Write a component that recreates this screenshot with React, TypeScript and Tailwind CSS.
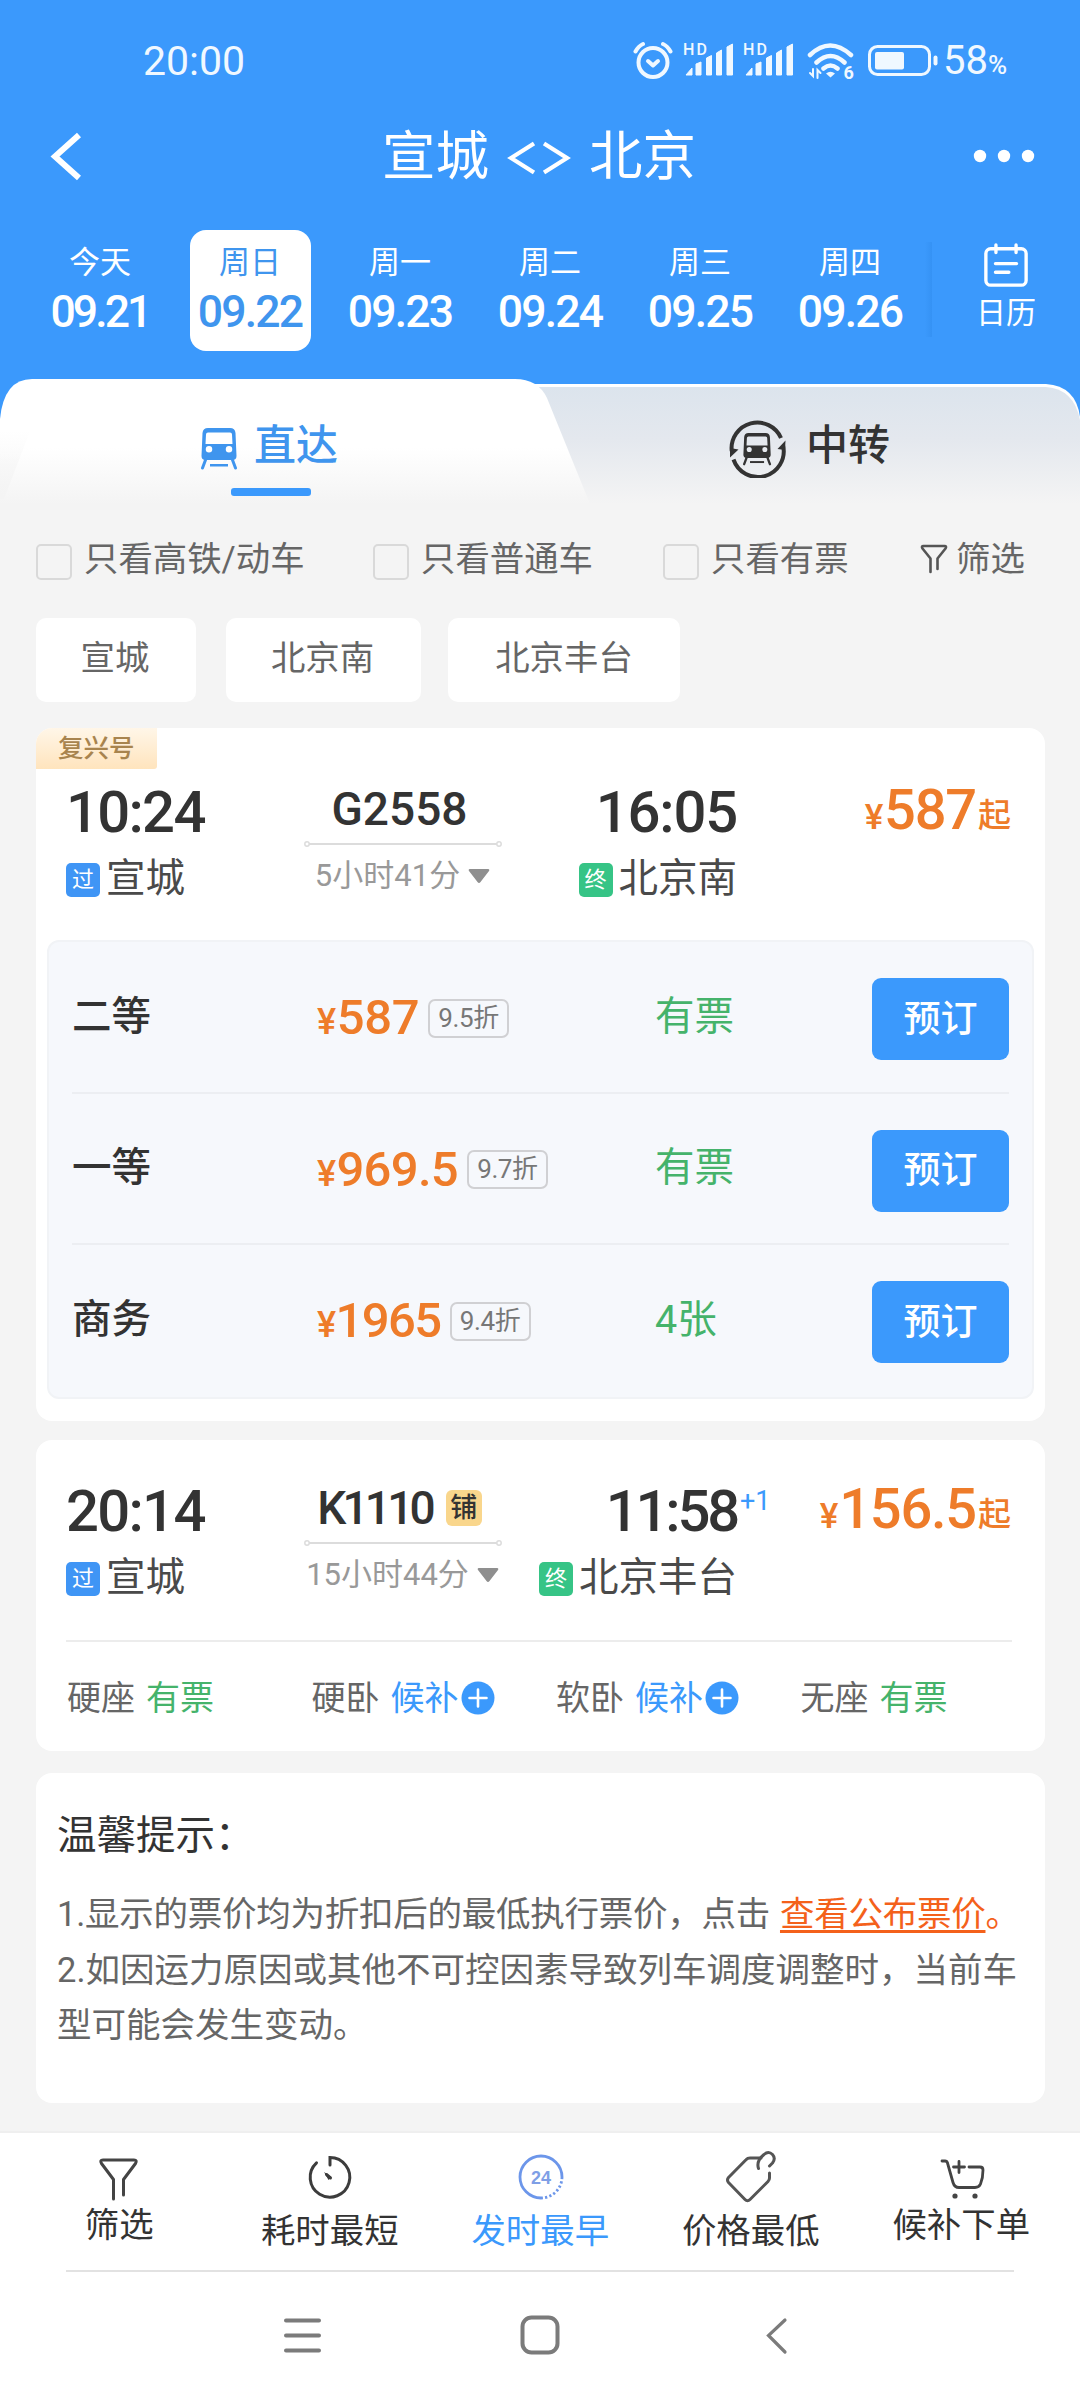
import { ReactNode } from "react";

/* ----------- Data ----------- */
interface IDay {
  label: string;
  date: string;
}
interface ISeat {
  name: string;
  price: string;
  discount: string;
  stock: string;
  tracking: string;
}
interface ITrain {
  depart: string;
  arrive: string;
  arriveTracking: string;
  nextDay?: string;
  code: string;
  codeTracking: string;
  sleeper?: boolean;
  duration: string;
  from: string;
  to: string;
  price: string;
}

const DAYS: IDay[] = [
  { label: "今天", date: "09.21" },
  { label: "周日", date: "09.22" },
  { label: "周一", date: "09.23" },
  { label: "周二", date: "09.24" },
  { label: "周三", date: "09.25" },
  { label: "周四", date: "09.26" },
];

const SEATS: ISeat[] = [
  { name: "二等", price: "587", discount: "9.5折", stock: "有票", tracking: "tracking-[-0.4px]" },
  { name: "一等", price: "969.5", discount: "9.7折", stock: "有票", tracking: "tracking-[-0.7px]" },
  { name: "商务", price: "1965", discount: "9.4折", stock: "4张", tracking: "tracking-[-1.6px]" },
];

const TRAINS: ITrain[] = [
  {
    depart: "10:24",
    arrive: "16:05",
    arriveTracking: "tracking-[-1.2px]",
    code: "G2558",
    codeTracking: "",
    duration: "5小时41分",
    from: "宣城",
    to: "北京南",
    price: "587",
  },
  {
    depart: "20:14",
    arrive: "11:58",
    arriveTracking: "tracking-[-3.2px]",
    nextDay: "+1",
    code: "K1110",
    codeTracking: "tracking-[-3.8px]",
    sleeper: true,
    duration: "15小时44分",
    from: "宣城",
    to: "北京丰台",
    price: "156.5",
  },
];

const SIMPLE_SEATS = [
  { name: "硬座", waitlist: false },
  { name: "硬卧", waitlist: true },
  { name: "软卧", waitlist: true },
  { name: "无座", waitlist: false },
];

/* ----------- Icons ----------- */
const SignalIcon = () => (
  <svg width="52" height="36" viewBox="0 0 52 36" fill="#f0f8ff">
    <text x="0" y="14" fontSize="16" fontWeight="500" fontFamily="Roboto, sans-serif" textLength="24">
      HD
    </text>
    <path d="M3 34l6-7v7zM13 34v-11l5-2v13zM23.500 34v-17l5-2.500v19.500zM33.500 34v-22l5-3v25zM44 34v-28l5.500-3v31z" stroke="#f0f8ff" strokeWidth="1" strokeLinejoin="round" />
  </svg>
);

const StatusIcons = () => (
  <div className="flex items-start">
    <svg width="40" height="38" viewBox="0 0 40 38" fill="none" stroke="#f0f8ff" strokeWidth="4" strokeLinecap="round">
      <circle cx="20" cy="21.500" r="14.500" />
      <path d="M2.500 10.500q3-5.500 7.500-7.500M37.500 10.500q-3-5.500-7.500-7.500" />
      <path d="M15 20l5 4.500 5-4.500" strokeLinejoin="round" />
    </svg>
    <div className="ml-[10px]">
      <SignalIcon />
    </div>
    <div className="ml-[8px]">
      <SignalIcon />
    </div>
    <svg className="ml-[12px] mt-[1px]" width="50" height="40" viewBox="0 0 50 40" fill="none" stroke="#f0f8ff" strokeWidth="4.500" strokeLinecap="round">
      <path d="M3 13q20-19 41 0M9.500 20.500q14-13 28 0M16.500 26.500q7-6 14 0" />
      <path d="M19 31.500q4.500-3.500 9 0l-4.500 4z" fill="#f0f8ff" stroke="none" />
      <path d="M6 27v7l-3-3M10.500 36v-8l3 3" strokeWidth="2" />
      <text x="36.500" y="36.500" fontSize="18" fontWeight="700" fontFamily="Roboto, sans-serif" fill="#f0f8ff" stroke="none">
        6
      </text>
    </svg>
    <svg className="ml-[11px] mt-[4px]" width="70" height="32" viewBox="0 0 70 32">
      <rect x="1.500" y="1.500" width="60" height="28" rx="8" fill="none" stroke="#f0f8ff" strokeWidth="3" />
      <rect x="7" y="7" width="29" height="17.500" rx="2" fill="#f0f8ff" />
      <rect x="65.500" y="10.500" width="4" height="10" rx="2" fill="#f0f8ff" />
    </svg>
  </div>
);

const CalendarIcon = () => (
  <svg width="46" height="46" viewBox="0 0 48 48" fill="none" stroke="#fff" strokeWidth="3.500" strokeLinecap="round">
    <rect x="3" y="6" width="42" height="38" rx="5" />
    <path d="M13.500 2v8M34.500 2v8M13 21.500h22M13 30.500h14" />
  </svg>
);

const TrainGlyph = () => (
  <g>
    <path
      fillRule="evenodd"
      d="M7 0h22q5 0 5.500 5l1 23q0 4-4 4h-27q-4 0-4-4l1-23q.5-5 5.500-5zM7 4.500q-2 0-2 2l-.5 9.500h27l-.5-9.500q0-2-2-2zM8 18a3.200 3.200 0 1 0 0 6.500a3.200 3.200 0 1 0 0-6.500zM28 18a3.200 3.200 0 1 0 0 6.500a3.200 3.200 0 1 0 0-6.500z"
    />
    <path d="M4.500 32L1.500 40M31.500 32L34.500 40" stroke="currentColor" strokeWidth="3" strokeLinecap="round" />
    <rect x="9" y="36" width="18" height="2.500" />
  </g>
);

const TrainIcon = () => (
  <svg width="36" height="42" viewBox="0 0 36 42" fill="currentColor">
    <TrainGlyph />
  </svg>
);

const TransferIcon = () => (
  <svg width="58" height="58" viewBox="0 0 58 58" fill="currentColor">
    <g fill="none" stroke="currentColor" strokeWidth="4">
      <path d="M3.700 31A25.800 25.800 0 0 1 53 18" />
      <path d="M55.200 26A25.800 25.800 0 0 1 5.500 39.500" />
    </g>
    <path d="M2 28l8.500 1.500L2 37.500zM57.500 20.500l-8 8.500 7.500 1z" />
    <g transform="translate(15 13) scale(.78)">
      <TrainGlyph />
    </g>
  </svg>
);

const FunnelSmallIcon = () => (
  <svg width="28" height="30" viewBox="0 0 28 30" fill="none" stroke="#555" strokeWidth="2.600" strokeLinecap="round" strokeLinejoin="round">
    <path d="M10.500 28V14.500L2.500 4.500q-1.500-2.500 1-2.500h21q2.500 0 1 2.500l-8 10V25" />
  </svg>
);

const FunnelIcon = () => (
  <svg width="50" height="56" viewBox="0 0 50 56" fill="none" stroke="#444" strokeWidth="3" strokeLinecap="round" strokeLinejoin="round">
    <path d="M19.500 47V27.500L7.500 11.500Q5.500 8 9 8H40Q43.500 8 41.500 11.500L29.500 27.500V43" />
  </svg>
);

const ClockIcon = () => (
  <svg width="50" height="56" viewBox="0 0 50 56" fill="none" stroke="#3c3c3c" strokeWidth="3" strokeLinecap="round">
    <path d="M25 13V5.500A19.800 19.800 0 1 1 11.500 10.800" />
    <path d="M19 20l7.500 5-3 3z" fill="#3c3c3c" stroke="none" />
    <path d="M21.500 22.500l4 3.500" />
  </svg>
);

const HoursIcon = () => (
  <svg width="50" height="56" viewBox="0 0 50 56" fill="none" stroke="#6c96ea" strokeWidth="2.800">
    <path d="M47 25A21 21 0 1 0 26 46" />
    <path d="M47 25A21 21 0 0 1 26 46" strokeDasharray="2.200 2.200" />
    <text x="26" y="31.500" textAnchor="middle" fontSize="18" fontWeight="700" fontFamily="Liberation Sans, sans-serif" fill="#7f9fe6" stroke="none">
      24
    </text>
  </svg>
);

const TagIcon = () => (
  <svg width="56" height="60" viewBox="0 0 56 60" fill="none" stroke="#555" strokeWidth="3" strokeLinecap="round" strokeLinejoin="round">
    <path d="M38 9H27Q24.500 9 23 10.700L5.500 28.500Q3.500 31 5.500 33.500L22 50.500Q24.500 53 27 50.500L45 32.500Q46.500 31 46.500 29V24" />
    <path d="M35.500 19.500Q33 12 41 5.500Q45.500 1.500 49.500 5.500Q53 9.500 49.500 14L46.500 17" />
  </svg>
);

const CartIcon = () => (
  <svg width="50" height="56" viewBox="0 0 50 56" fill="none" stroke="#444" strokeWidth="2.800" strokeLinecap="round" strokeLinejoin="round">
    <path d="M6 9h3q2 0 2.500 2L17 30.500q1.500 5 6 5h16q4 0 5.500-3.500Q47 26 47 18q0-3-3-3H33" />
    <path d="M23 9.500v11M17.500 15h11" />
    <circle cx="19" cy="44" r="2.600" fill="#444" stroke="none" />
    <circle cx="39" cy="44" r="2.600" fill="#444" stroke="none" />
  </svg>
);

const PlusCircle = () => (
  <svg className="ml-[2px]" width="34" height="34" viewBox="0 0 34 34">
    <circle cx="17" cy="17" r="16.500" fill="#3b99fc" />
    <path d="M17 8.500v17M8.500 17h17" stroke="#fff" strokeWidth="2.600" strokeLinecap="round" />
  </svg>
);

/* ----------- Header ----------- */
const StatusBar = () => (
  <div className="flex h-[110px] pt-[41px] pl-[143px] text-[#f0f8ff]">
    <span className="w-[490px] pt-[1px] text-[41px] leading-[38px]">20:00</span>
    <StatusIcons />
    <span className="ml-[5px] pt-[1px] text-[40px] leading-[38px]">
      58<span className="text-[26px] font-medium">%</span>
    </span>
  </div>
);

const TitleBar = () => (
  <div className="flex h-[92px] items-center justify-between pr-[44px] pl-[46px] text-white">
    <svg width="120" height="50" viewBox="0 0 120 50" fill="none" stroke="#fff" strokeWidth="6">
      <path d="M33 4L9 25.500L33 47" />
    </svg>
    <h1 className="pt-[2px] text-[53.5px] leading-[64px] font-normal">
      宣城<span className="mx-[18px] inline-flex">
        <svg width="64" height="34" viewBox="0 0 64 34" fill="none" stroke="#fff" strokeWidth="4.200">
          <path d="M27 2.500L4 17L27 31.500M37 2.500L60 17L37 31.500" />
        </svg>
      </span>北京
    </h1>
    <svg width="124" height="20" viewBox="0 0 124 20" fill="#fff">
      <circle cx="68" cy="10" r="6.200" />
      <circle cx="92" cy="10" r="6.200" />
      <circle cx="116" cy="10" r="6.200" />
    </svg>
  </div>
);

const DateStrip = () => (
  <div className="flex h-[177px] pt-[28px] text-white">
    <div className="flex w-[932px] pl-[25px]">
      {DAYS.map(({ label, date }, idx) => (
        <div key={date} className="flex w-[150px] shrink-0 justify-center">
          <div
            className={
              idx === 1
                ? "flex h-[121px] w-[121px] flex-col items-center rounded-2xl bg-white pt-[14px] text-[#3f95ee]"
                : "flex h-[121px] w-[121px] flex-col items-center pt-[14px]"
            }
          >
            <span className="text-[31px] leading-[38px]">{label}</span>
            <span
              className={
                idx === 0
                  ? "mt-[9px] text-[44.5px] leading-[42px] font-medium tracking-[-2.9px]"
                  : "mt-[9px] text-[44.5px] leading-[42px] font-medium tracking-[-1.8px]"
              }
            >
              {date}
            </span>
          </div>
        </div>
      ))}
      <div className="mt-[12px] h-[95px] w-[7px] shrink-0 bg-linear-to-r from-[#3b99fc] to-[#3592f4]" />
    </div>
    <div className="flex w-[148px] flex-col items-center pt-[13px]">
      <CalendarIcon />
      <span className="mt-[5px] text-[30px] leading-[38px]">日历</span>
    </div>
  </div>
);

const TabBar = () => (
  <div className="relative h-[125px] bg-[#f4f4f4]">
    <svg className="absolute inset-0" width="1080" height="125" viewBox="0 0 1080 125">
      <defs>
        <linearGradient id="tabOn" x1="0" y1="0" x2="0" y2="1">
          <stop offset=".55" stopColor="#fff" />
          <stop offset="1" stopColor="#f4f4f4" />
        </linearGradient>
        <linearGradient id="tabEdge" x1="0" y1="0" x2="0" y2="1">
          <stop offset="0" stopColor="#f4f4f4" stopOpacity="0" />
          <stop offset="1" stopColor="#f4f4f4" />
        </linearGradient>
        <linearGradient id="tabOff" x1="0" y1="0" x2="0" y2="1">
          <stop offset="0" stopColor="#dce4ed" />
          <stop offset=".45" stopColor="#e4e8ee" />
          <stop offset="1" stopColor="#f4f4f4" />
        </linearGradient>
      </defs>
      <rect width="1080" height="50" fill="#3b99fc" />
      <path d="M480 5H1046Q1076 7 1080 38V60H480z" fill="#fff" />
      <path d="M480 8H1046Q1074 10 1080 41V125H480z" fill="url(#tabOff)" />
      <path d="M0 40Q4 0 32 0H515Q538 0 547 19L590 125H0z" fill="url(#tabOn)" />
      <path d="M0 52H30L4 120H0z" fill="url(#tabEdge)" />
    </svg>
    <div className="relative flex">
      <div className="flex w-[540px] pt-[44px] pl-[201px] text-[#3f95ee]">
        <div className="pt-[5px]">
          <TrainIcon />
        </div>
        <div className="ml-[17px] pt-[2px]">
          <span className="block text-[42px] leading-[42px] font-medium">直达</span>
          <div className="-ml-[23px] mt-[21px] h-[8px] w-[80px] rounded-[3px] bg-[#3b99fc]" />
        </div>
      </div>
      <div className="flex pt-[44px] pl-[188px] text-[#333]">
        <div className="-mt-[3px]">
          <TransferIcon />
        </div>
        <span className="ml-[20px] pt-[2px] text-[42px] leading-[42px] font-medium">中转</span>
      </div>
    </div>
  </div>
);

/* ----------- Filters ----------- */
const CheckOption = ({ label, className }: { label: string; className: string }) => (
  <div className={`flex items-center ${className}`}>
    <div className="mt-[5px] h-[36px] w-[36px] rounded-[5px] border-[2.5px] border-[#d9d9d9]" />
    <span className="ml-[12px]">{label}</span>
  </div>
);

const Filters = () => (
  <div className="h-[224px] pl-[36px] text-[34.4px] leading-[44px] text-[#666]">
    <div className="mt-[33px] flex h-[44px] items-center">
      <CheckOption label="只看高铁/动车" className="w-[337px]" />
      <CheckOption label="只看普通车" className="w-[290px]" />
      <CheckOption label="只看有票" className="w-[257px]" />
      <div className="flex items-center">
        <FunnelSmallIcon />
        <span className="ml-[8px]">筛选</span>
      </div>
    </div>
    <div className="mt-[37px] flex">
      <div className="h-[84px] w-[160px] rounded-[10px] bg-white pt-[18px] pr-[2px] text-center">宣城</div>
      <div className="ml-[30px] h-[84px] w-[195px] rounded-[10px] bg-white pt-[18px] pr-[2px] text-center">北京南</div>
      <div className="ml-[27px] h-[84px] w-[232px] rounded-[10px] bg-white pt-[18px] text-center">北京丰台</div>
    </div>
  </div>
);

/* ----------- Trains ----------- */
const StationMark = ({ children, green }: { children: string; green?: boolean }) => (
  <span
    className={
      green
        ? "mt-[2px] mr-[6px] flex h-[34px] w-[34px] items-center justify-center rounded-[5px] bg-[#36c486] text-[22px] leading-[22px] text-white"
        : "mt-[2px] mr-[6px] flex h-[34px] w-[34px] items-center justify-center rounded-[5px] bg-[#3f95f5] text-[22px] leading-[22px] text-white"
    }
  >
    {children}
  </span>
);

const TrainSummary = ({ train }: { train: ITrain }) => {
  const { depart, arrive, arriveTracking, nextDay, code, codeTracking, sleeper, duration, from, to, price } = train;

  return (
    <div className="flex px-[30px] text-[#333]">
      <div className="w-[238px]">
        <div className="text-[58px] leading-[58px] font-medium tracking-[-1.7px]">{depart}</div>
        <div className="mt-[18px] flex h-[40px] items-center text-[39.5px] leading-[40px] text-[#4a4a4a]">
          <StationMark>过</StationMark>
          {from}
        </div>
      </div>
      <div className="flex w-[197px] flex-col items-center">
        <div className="flex h-[51px] items-center pr-[6px] text-[46px] leading-[46px] font-medium">
          <span className={codeTracking}>{code}</span>
          {sleeper && (
            <span className="ml-[14px] h-[36px] w-[36px] rounded-[6px] bg-[#f9d68c] text-center text-[27px] leading-[36px]">铺</span>
          )}
        </div>
        <svg className="mt-[6px]" width="200" height="8" viewBox="0 0 198 8" fill="none" stroke="#dcdcdc" strokeWidth="1.500">
          <path d="M5 4h188" strokeWidth="2" />
          <circle cx="3" cy="4" r="2.200" />
          <circle cx="195" cy="4" r="2.200" />
        </svg>
        <div className="mt-[10px] flex items-center text-[31px] leading-[36px] text-[#999]">
          {duration}
          <svg className="ml-[8px]" width="22" height="14" viewBox="0 0 22 14" fill="#8f8f8f">
            <path d="M2 0h18q2 0 1 2l-8.500 11q-1.500 2-3 0L1 2Q0 0 2 0z" />
          </svg>
        </div>
      </div>
      <div className="w-[236px]">
        <div className={`relative text-right text-[58px] leading-[58px] font-medium ${arriveTracking}`}>
          {arrive}
          {nextDay && (
            <span className="absolute top-[5px] left-full pl-[3px] text-[27px] leading-[28px] font-normal tracking-normal text-[#3b99fc]">
              {nextDay}
            </span>
          )}
        </div>
        <div className="mt-[18px] flex h-[40px] items-center justify-end text-[39.5px] leading-[40px] text-[#4a4a4a]">
          <StationMark green>终</StationMark>
          {to}
        </div>
      </div>
      <div className="flex-1 pr-[4px] text-right text-[56px] leading-[54px] font-medium tracking-[-1.2px] whitespace-nowrap text-[#ee7c2a]">
        <span className="mr-[2px] text-[35px]">¥</span>
        {price}
        <span className="relative -top-[2px] ml-[2px] text-[33px] tracking-normal">起</span>
      </div>
    </div>
  );
};

const SeatRow = ({ seat }: { seat: ISeat }) => (
  <div className="flex h-[151.5px] items-center border-b-2 border-[#eceef2] pb-[1px] last:border-transparent">
    <span className="w-[245px] text-[39.5px] font-medium text-[#333]">{seat.name}</span>
    <div className="mt-[4px] flex w-[338px] items-center">
      <span className={`mt-[4px] text-[49px] leading-[50px] font-medium text-[#ee7c2a] ${seat.tracking}`}>
        <span className="mr-[1px] text-[36px]">¥</span>
        {seat.price}
      </span>
      <span className="ml-[9px] h-[39px] w-[81px] rounded-[7px] border-2 border-[#d0d0d3] text-center text-[26px] leading-[34px] tracking-[-0.4px] text-[#777]">
        {seat.discount}
      </span>
    </div>
    <span className="w-[217px] text-[39.5px] text-[#45b36b]">{seat.stock}</span>
    <button className="mt-[6px] h-[82px] w-[137px] rounded-[9px] bg-[#3b99fc] text-[37px] font-medium text-white">预订</button>
  </div>
);

const Card = ({ className, children }: { className: string; children: ReactNode }) => (
  <div className={`mx-[36px] w-[1009px] rounded-2xl bg-white ${className}`}>{children}</div>
);

/* ----------- Footer ----------- */
const BottomItem = ({ icon, label, className }: { icon: ReactNode; label: string; className: string }) => (
  <div className={`flex w-[210.5px] flex-col items-center text-[34.4px] leading-[42px] ${className}`}>
    <div className="flex h-[52px] justify-center">{icon}</div>
    {label}
  </div>
);

const BottomBar = () => (
  <div className="h-[269px] border-t-2 border-[#efefef] bg-white">
    <div className="flex h-[137px] pt-[19px] pl-[14px]">
      <BottomItem icon={<FunnelIcon />} label="筛选" className="text-[#333]" />
      <BottomItem icon={<ClockIcon />} label="耗时最短" className="gap-[6px] text-[#333]" />
      <BottomItem icon={<HoursIcon />} label="发时最早" className="gap-[6px] text-[#3b99fc]" />
      <BottomItem icon={<TagIcon />} label="价格最低" className="-mt-[3px] gap-[9px] text-[#333]" />
      <BottomItem icon={<CartIcon />} label="候补下单" className="text-[#333]" />
    </div>
    <div className="mx-[66px] h-[1.5px] bg-[#e2e2e2]" />
    <svg className="mt-[39px]" width="1080" height="50" viewBox="0 0 1080 50" fill="none" stroke="#7b7b7b" strokeWidth="4" strokeLinecap="round">
      <path d="M286 9.500h33M286 24.500h33M286 39.500h33" />
      <rect x="522.500" y="6.500" width="35" height="35" rx="9" />
      <path d="M785 9L768.500 24.500L785 41" strokeWidth="3.200" />
    </svg>
  </div>
);

export default function App() {
  return (
    <div className="flex h-[2400px] w-[1080px] flex-col overflow-hidden bg-[#f4f4f4] font-[Roboto,'Noto_Sans_CJK_SC',sans-serif]">
      <div className="bg-[#3b99fc]">
        <StatusBar />
        <TitleBar />
        <DateStrip />
      </div>
      <TabBar />
      <Filters />

      <Card className="h-[693px] overflow-hidden">
        <div className="h-[41px] w-[121px] rounded-br-[3px] bg-linear-to-b from-[#fff6e8] to-[#ffe4bd] pl-[22px] text-[25.5px] leading-[41px] font-medium text-[#a8844e]">
          复兴号
        </div>
        <div className="mt-[14px] h-[157px]">
          <TrainSummary train={TRAINS[0]} />
        </div>
        <div className="mx-[11px] h-[459px] rounded-[12px] border-2 border-[#f1f3f6] bg-[#f6f8fc] px-[23px]">
          {SEATS.map((seat) => (
            <SeatRow key={seat.name} seat={seat} />
          ))}
        </div>
      </Card>

      <Card className="mt-[19px] h-[311px] pt-[42px]">
        <TrainSummary train={TRAINS[1]} />
        <div className="mt-[42px] mr-[33px] ml-[30px] h-[2px] bg-[#ececec]" />
        <div className="mt-[33px] flex pl-[31px] text-[34px] leading-[46px] text-[#666]">
          {SIMPLE_SEATS.map(({ name, waitlist }) => (
            <div key={name} className="flex w-[244.5px] items-center">
              <span className="mr-[11px]">{name}</span>
              {waitlist ? (
                <>
                  <span className="text-[#3b99fc]">候补</span>
                  <PlusCircle />
                </>
              ) : (
                <span className="text-[#45b36b]">有票</span>
              )}
            </div>
          ))}
        </div>
      </Card>

      <Card className="mt-[22px] h-[330px] pt-[37px] pl-[21px]">
        <h2 className="text-[39.5px] leading-[52px] font-normal text-[#333]">温馨提示：</h2>
        <div className="mt-[25px] text-[34.5px] leading-[55.5px] whitespace-nowrap text-[#666]">
          <p className="tracking-[-0.25px]">
            1.显示的票价均为折扣后的最低执行票价，点击
            <span className="ml-[10px] text-[#f4611b]">
              <span className="underline decoration-[3px] underline-offset-[4px]">查看公布票价</span>。
            </span>
          </p>
          <p>2.如因运力原因或其他不可控因素导致列车调度调整时，当前车</p>
          <p>型可能会发生变动。</p>
        </div>
      </Card>

      <div className="mt-auto">
        <BottomBar />
      </div>
    </div>
  );
}
